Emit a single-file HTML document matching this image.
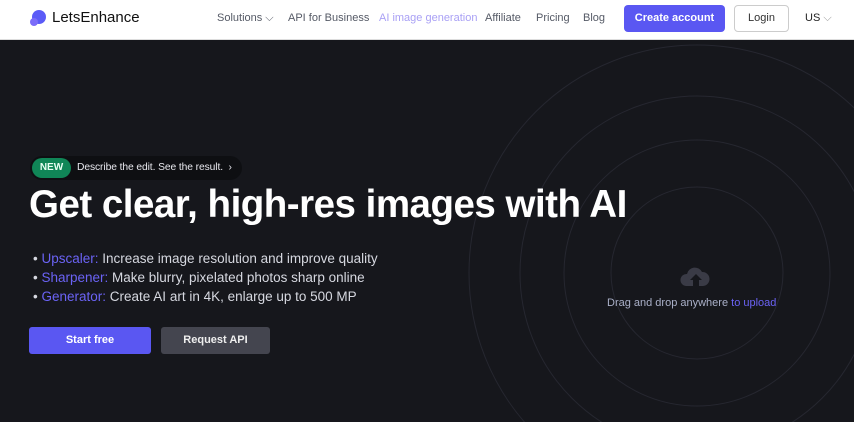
<!DOCTYPE html>
<html><head><style>
*{margin:0;padding:0;box-sizing:border-box}
html,body{width:854px;height:422px;overflow:hidden}
body{font-family:"Liberation Sans",sans-serif;background:#16171c;position:relative}
.nav{position:absolute;top:0;left:0;width:854px;height:40px;background:#fff;border-bottom:1px solid #ddd}
.nav span{position:absolute;top:12px;font-size:11px;color:#555a66}
.hero{position:absolute;top:40px;left:0;width:854px;height:382px;overflow:hidden}
</style></head><body>
<div class="nav">
<svg style="position:absolute;left:29px;top:9px" width="18" height="18"><circle cx="10" cy="8" r="7" fill="#5b5bf7"/><circle cx="5" cy="13" r="4" fill="#7b6cf9"/></svg>
<div style="position:absolute;left:52px;top:9px;font-size:15px;color:#111;font-weight:500">LetsEnhance</div>
<span style="left:217px">Solutions ⌵</span>
<span style="left:288px">API for Business</span>
<span style="left:379px;color:#a9a0f5">AI image generation</span>
<span style="left:485px">Affiliate</span>
<span style="left:536px">Pricing</span>
<span style="left:583px">Blog</span>
<div style="position:absolute;left:624px;top:5px;width:101px;height:27px;background:#5a57f2;border-radius:4px;color:#fff;font-size:11px;font-weight:bold;text-align:center;line-height:27px">Create account</div>
<div style="position:absolute;left:734px;top:5px;width:55px;height:27px;border:1px solid #ccc;border-radius:4px;color:#333;font-size:11px;text-align:center;line-height:25px">Login</div>
<span style="left:805px;color:#222">US <span style="position:static;color:#999">⌵</span></span>
</div>
<div class="hero">
<svg width="854" height="382" style="position:absolute;left:0;top:0;display:block"><g fill="none" stroke="#262730" stroke-width="1"><circle cx="697" cy="233" r="86"/><circle cx="697" cy="233" r="133"/><circle cx="697" cy="233" r="177"/><circle cx="697" cy="233" r="228"/></g>
<path d="M686 246a6 6 0 0 1 1-12a8 8 0 0 1 15-2a6 6 0 0 1 1 14h-4v-6h3l-6-6-6 6h3v6z" fill="#3a3b46"/></svg>
<div style="position:absolute;left:607px;top:257px;font-size:11px;color:#aab0c8">Drag and drop anywhere <span style="color:#6b63f5">to upload</span></div>
<div style="position:absolute;left:30px;top:116px;width:212px;height:24px;background:#0e0f12;border-radius:12px"></div>
<div style="position:absolute;left:32px;top:118px;width:39px;height:20px;background:#108657;border-radius:10px;color:#e8fff3;font-size:10px;font-weight:bold;text-align:center;line-height:20px">NEW</div>
<div style="position:absolute;left:77px;top:122px;font-size:10.3px;color:#e8e8ee;letter-spacing:-0.1px">Describe the edit. See the result. &nbsp;›</div>
<div style="position:absolute;left:29px;top:143px;font-size:38.5px;font-weight:bold;color:#fff;letter-spacing:-0.5px;white-space:nowrap">Get clear, high-res images with AI</div>
<div style="position:absolute;left:33px;top:209px;font-size:13.5px;color:#d6d8e0;line-height:19px">
<div>• <span style="color:#6b63f5">Upscaler:</span> Increase image resolution and improve quality</div>
<div>• <span style="color:#6b63f5">Sharpener:</span> Make blurry, pixelated photos sharp online</div>
<div>• <span style="color:#6b63f5">Generator:</span> Create AI art in 4K, enlarge up to 500 MP</div></div>
<div style="position:absolute;left:29px;top:287px;width:122px;height:27px;background:#5a57f2;border-radius:3px;color:#fff;font-size:11px;font-weight:bold;text-align:center;line-height:27px">Start free</div>
<div style="position:absolute;left:161px;top:287px;width:109px;height:27px;background:#44454f;border-radius:3px;color:#eee;font-size:11px;font-weight:bold;text-align:center;line-height:27px">Request API</div>
</div>
</body></html>
